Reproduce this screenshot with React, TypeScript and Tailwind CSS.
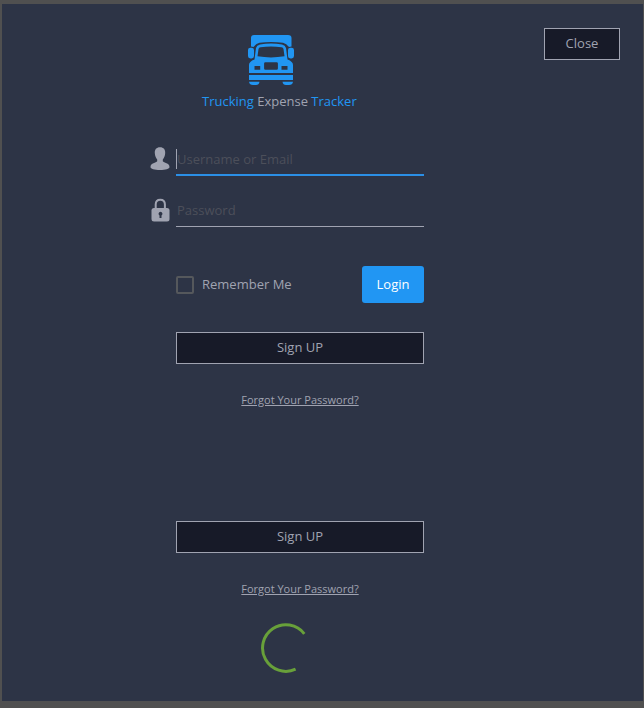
function TruckLogo() {
  return (
    <svg viewBox="0 0 47 50" className="h-[50px] w-[47px]" aria-hidden="true">
      <path
        fill="#2196f3"
        d="M6 0H40Q43.500 0 43.500 3V11.500L41 12Q38.500 8.500 35 7.800Q23 6 11.500 7.800Q8 8.500 5.500 12L3 11.500V3Q3 0 6 0Z"
      />
      <rect x="0" y="12.700" width="6" height="10.800" rx="2.400" fill="#2196f3" />
      <rect x="40" y="12.700" width="6" height="10.800" rx="2.400" fill="#2196f3" />
      <path
        fill="#2196f3"
        fillRule="evenodd"
        d="M12 9.500Q23 7.500 34 9.500Q37.300 10.200 38 13L39.500 24.500Q45 26.500 45 30V38H1V30Q1 26.500 6.500 24.500L8 13Q8.700 10.200 12 9.500ZM12.500 12.200Q10.800 12.500 10.500 14L9.500 21.300Q23 23.600 36.500 21.300L35.500 14Q35.200 12.500 33.500 12.200Q23 10.600 12.500 12.200ZM6.500 31V34.800H12.200V31ZM17.400 27.200H28.600Q29.900 27.200 29.900 28.500V33.500Q29.900 34.800 28.600 34.800H17.400Q16.100 34.800 16.100 33.500V28.500Q16.100 27.200 17.400 27.200ZM33.500 31V34.800H39.500V31Z"
      />
      <path fill="#2196f3" d="M1 40H45V45H1ZM1 46.700H11.500Q11 50 8 50H5Q1.500 50 1 46.700ZM34.500 46.700H45Q44.500 50 41 50H38Q35 50 34.500 46.700Z" />
    </svg>
  );
}

function UserIcon() {
  return (
    <svg viewBox="0 0 20 24" className="h-6 w-5 shrink-0" aria-hidden="true">
      <path
        fill="#a0a3b1"
        d="M10 0.300C13.700 0.300 15.400 2.600 15.200 6C15.100 9 14 11 12.800 12.500V14.300C13.800 15.800 19.500 16 19.500 20C19.500 22 15.500 23 10 23S0.500 22 0.500 20C0.500 16 6.200 15.800 7.200 14.300V12.500C6 11 4.900 9 4.800 6C4.600 2.600 6.300 0.300 10 0.300Z"
      />
    </svg>
  );
}

function LockIcon() {
  return (
    <svg viewBox="0 0 20 24" className="h-6 w-5 shrink-0" aria-hidden="true">
      <path d="M5.700 11V6.500Q5.700 1.800 10.300 1.800T14.900 6.500V11" fill="none" stroke="#a0a3b1" strokeWidth="2" />
      <rect x="1.500" y="10" width="18" height="13.500" rx="2.500" fill="#a0a3b1" />
      <path fill="#2d3446" d="M10.500 13.700A2 2 0 0 1 11.500 17.400V20H9.500V17.400A2 2 0 0 1 10.500 13.700Z" />
    </svg>
  );
}

const outlined =
  "h-8 border border-[#a0a3b1] bg-[#171a28] text-[13px] text-[#a0a3b1] hover:bg-[#1f2335]";

function SignUpBlock() {
  return (
    <div className="flex flex-col items-center gap-[26px] pl-[26px]">
      <button type="button" className={`${outlined} w-full`}>
        Sign UP
      </button>
      <a href="#forgot" className="text-[11px] leading-5 text-[#a0a3b1] underline">
        Forgot Your Password?
      </a>
    </div>
  );
}

export default function App() {
  return (
    <div className="flex min-h-screen bg-[#505050] pt-1 pr-px pb-[7px] pl-0.5 font-['Open_Sans','Noto_Sans',sans-serif]">
      <main className="grid flex-1 grid-cols-[148fr_274px_219fr] bg-[#2d3446]">
        <form className="col-start-2 pt-[31px] pb-6" onSubmit={(e) => e.preventDefault()}>
          <header className="flex flex-col">
            <div className="pl-[98px]">
              <TruckLogo />
            </div>
            <h1 className="mt-1 pl-[52px] text-[13px] leading-6 whitespace-nowrap text-[#2196f3]">
              Trucking <span className="text-[#a0a3b1]">Expense</span> Tracker
            </h1>
          </header>

          <div className="mt-[34px] flex gap-[6px]">
            <label htmlFor="username" aria-label="Username or Email">
              <UserIcon />
            </label>
            <div className="flex h-[29px] min-w-0 flex-1 border-b-2 border-[#2b8fe6]">
              <span className="mt-[2px] h-5 w-px bg-[#a0a3b1]" />
              <input
                id="username"
                type="text"
                placeholder="Username or Email"
                className="h-6 w-full min-w-0 bg-transparent text-[13px] text-[#a0a3b1] outline-none placeholder:text-[#4c4f5a]"
              />
            </div>
          </div>

          <div className="mt-[22px] flex gap-[6px]">
            <label htmlFor="password" aria-label="Password">
              <LockIcon />
            </label>
            <div className="flex h-[29px] min-w-0 flex-1 border-b border-[#a0a3b1] pl-px">
              <input
                id="password"
                type="password"
                placeholder="Password"
                className="h-6 w-full min-w-0 bg-transparent text-[13px] text-[#a0a3b1] outline-none placeholder:text-[#4c4f5a]"
              />
            </div>
          </div>

          <div className="mt-[39px] flex items-center justify-between pl-[26px]">
            <label className="flex items-center gap-2 text-[13px] text-[#a0a3b1]">
              <input
                type="checkbox"
                className="size-[18px] appearance-none rounded-xs border-2 border-[#55585c] checked:bg-[#2196f3]"
              />
              Remember Me
            </label>
            <button type="submit" className="h-[37px] w-[62px] rounded-[3px] bg-[#2196f3] text-[13px] text-white">
              Login
            </button>
          </div>

          <div className="mt-[29px]">
            <SignUpBlock />
          </div>
          <div className="mt-[111px]">
            <SignUpBlock />
          </div>

          <div className="mt-6 pl-[111px]" role="status" aria-label="Loading">
            <svg viewBox="0 0 50 50" className="size-[50px]" aria-hidden="true">
              <path d="M43.300 10.800A23.300 23.300 0 1 0 34.600 46.200" fill="none" stroke="#68a03a" strokeWidth="3" />
            </svg>
          </div>
        </form>

        <div className="flex items-start justify-end pt-6 pr-[23px]">
          <button type="button" className={`${outlined} w-[76px]`}>
            Close
          </button>
        </div>
      </main>
    </div>
  );
}
